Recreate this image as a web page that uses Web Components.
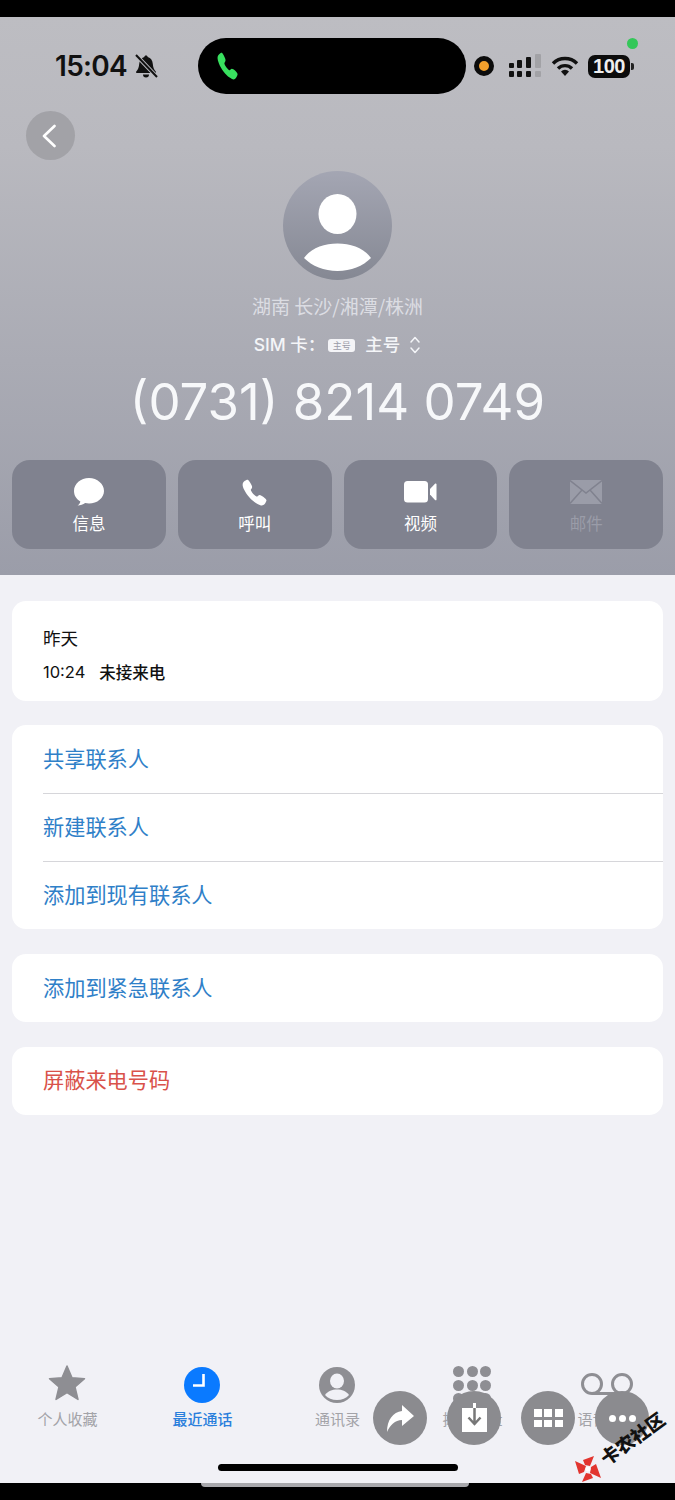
<!DOCTYPE html>
<html lang="zh">
<head>
<meta charset="utf-8">
<title>最近通话</title>
<style>
  html, body { margin: 0; padding: 0; background: #000; }
  body { width: 675px; height: 1500px; overflow: hidden; font-family: Inter, "Noto Sans CJK SC", sans-serif; }
</style>
</head>
<body>
<call-page></call-page>
<script>
// All icons live here so the elements only need a name
const ICONS = {
  phone: `<path fill="currentColor" d="M391 480c-19.5 0-47-7-88-30-50-28-88.500-53.900-138.200-103.400C116.900 298.800 93.600 267.800 61 208.500c-36.800-67-30.600-102.100-23.500-117.200C45.800 73.400 58.200 62.700 74.100 52a176 176 0 0 1 28.600-15.200c1-.4 1.900-.8 2.800-1.200 5-2.200 12.500-5.600 22-2 6.300 2.400 12 7.200 20.900 16 18.200 17.900 43 57.800 52.200 77.400 6.100 13.200 10.200 21.900 10.200 31.700 0 11.500-5.800 20.300-12.800 29.800-1.300 1.800-2.600 3.500-3.900 5.200-7.600 10-9.300 12.900-8.200 18 2.200 10.400 18.900 41.200 46.200 68.500s57.300 42.900 67.700 45.100c5.400 1.200 8.300-.6 18.700-8.500 1.500-1.100 3-2.300 4.600-3.500 10.700-7.900 19.100-13.500 30.300-13.500 9.700 0 18.100 4.200 31.900 11.200 18 9.100 59.100 33.600 77.100 51.800 8.800 8.800 13.700 14.500 16.100 20.800 3.600 9.500.2 17-2 22-.4.800-.8 1.700-1.200 2.700a176 176 0 0 1-15.300 28.600c-10.600 15.900-21.400 28.200-39.400 36.600A67 67 0 0 1 391 480z"/>`,
  bubble: `<path fill="currentColor" d="M12.500 0C5.600 0 0 5.200 0 11.500c0 3.900 2 7.300 5.300 9.400-.3 1.400-1 2.600-2.300 3.600 2.400 0 4.600-.8 6.300-2.200 1 .2 2.100.4 3.200.4 6.900 0 12.500-5.100 12.500-11.200S19.400 0 12.500 0z"/>`,
  video: `<rect x="0" y="0" width="24" height="21.500" rx="3.500" fill="currentColor"/><path fill="currentColor" d="M26 8l5-5.200c.7-.7 1.500-.3 1.500.6v15c0 .9-.8 1.300-1.500.6L26 13.500z"/>`,
  mail: `<rect x="0" y="0" width="32" height="24" fill="currentColor"/><path fill="none" stroke="#80828f" stroke-width="1.500" d="M0 .5 16 13 32 .5M0 23.500 12 10M32 23.500 20 10"/>`,
  star: `<path fill="currentColor" stroke="currentColor" stroke-width="1.500" stroke-linejoin="round" d="M20 1l5 11.800 12.500 1-9.500 8.200 3 12.400L20 27.700 9 34.400l3-12.400-9.500-8.200 12.500-1z"/>`,
  back: `<path fill="none" stroke="currentColor" stroke-width="2.600" stroke-linecap="round" stroke-linejoin="round" d="M12.500 2 2 12l10.500 10"/>`,
  share: `<path fill="currentColor" d="M15 0l12 11-12 10v-6C8 15 3 20 0 27 0 15 6 7 15 6z"/>`,
  updown: `<path fill="none" stroke="currentColor" stroke-width="1.500" stroke-linecap="round" stroke-linejoin="round" d="M2 6l4-4.500L10 6M2 12l4 4.500 4-4.500"/>`,
  bell: `<path fill="currentColor" d="M12 1.500c-1 0-1.700.7-1.700 1.600C7 4 5.500 6.500 5.200 10c-.3 3.500-1 5.500-3 7.500V19h19.600v-1.500c-2-2-2.700-4-3-7.500-.3-3.500-1.800-6-5.100-6.900 0-.9-.7-1.600-1.700-1.600z"/><path fill="currentColor" d="M9 20.500h6a3 3 0 0 1-6 0z"/><path stroke="#bcbcc1" stroke-width="4" d="M2 1l21 22"/><path stroke="currentColor" stroke-width="2" d="M2 1l21 22"/>`
};

class AppIcon extends HTMLElement {
  connectedCallback() {
    const name = this.getAttribute('name');
    const w = this.getAttribute('w') || 24;
    const h = this.getAttribute('h') || w;
    const box = this.getAttribute('box') || '0 0 24 24';
    this.attachShadow({ mode: 'open' }).innerHTML = `
      <style>:host { display: block; width: ${w}px; height: ${h}px; } svg { display: block; }</style>
      <svg xmlns="http://www.w3.org/2000/svg" width="${w}" height="${h}" viewBox="${box}" preserveAspectRatio="none">${ICONS[name]}</svg>`;
  }
}

class StatusBar extends HTMLElement {
  connectedCallback() {
    this.attachShadow({ mode: 'open' }).innerHTML = `
    <style>
      :host { display: flex; align-items: center; height: 56px; padding: 21px 0 0 55px; position: relative; color: #111; }
      .time { font: 600 28px/1 Inter, sans-serif; width: 79px; letter-spacing: -.7px; }
      .bell { width: 64px; }
      .island { width: 268px; height: 56px; border-radius: 28px; background: #000; color: #38e05f; display: flex; align-items: center; padding-left: 19px; box-sizing: border-box; }
      .rec { width: 20px; height: 20px; background: #f2a02c; border: 5px solid #0c0c0c; box-sizing: border-box; border-radius: 50%; margin-left: 8px; }
      .signal { margin-left: 15px; }
      .wifi { margin-left: 9px; }
      .battery { margin-left: 9px; display: flex; align-items: center; }
      .cell { width: 42px; height: 23px; border-radius: 7px; background: #0c0c0c; color: #eee; font: 700 20px/23px "Liberation Sans", sans-serif; text-align: center; letter-spacing: -.5px; }
      .nub { width: 3px; height: 7px; margin-left: 1px; background: #222; border-radius: 0 2px 2px 0; }
      .green { position: absolute; left: 627px; top: 21px; width: 11px; height: 11px; border-radius: 50%; background: #34c759; }
    </style>
    <div class="time">15:04</div>
    <div class="bell"><app-icon name="bell" w="24" h="24"></app-icon></div>
    <div class="island"><app-icon name="phone" w="21" h="28" box="20 20 470 470"></app-icon></div>
    <div class="rec"></div>
    <svg class="signal" width="33" height="24" viewBox="0 0 33 24">
      <g fill="#111"><rect x="0" y="9" width="5" height="5" rx="1"/><rect x="0" y="17" width="5" height="6" rx="1"/><rect x="8" y="6" width="5" height="8" rx="1"/><rect x="8" y="17" width="5" height="6" rx="1"/><rect x="17" y="3" width="5" height="11" rx="1"/><rect x="17" y="17" width="5" height="6" rx="1"/></g>
      <g fill="#a2a2a6"><rect x="26" y="0" width="6" height="14" rx="1"/><rect x="26" y="17" width="6" height="6" rx="1"/></g>
    </svg>
    <svg class="wifi" width="28" height="22" viewBox="0 0 28 22">
      <g fill="none" stroke="#111" stroke-width="3.400"><path d="M2 8.500a17 17 0 0 1 24 0"/><path d="M7 13.500a10 10 0 0 1 14 0"/></g>
      <path fill="#111" d="M14 21l-4-4.500a5.500 5.500 0 0 1 8 0z"/>
    </svg>
    <div class="battery"><div class="cell">100</div><div class="nub"></div></div>
    <div class="green"></div>`;
  }
}

class ActionButton extends HTMLElement {
  connectedCallback() {
    this.attachShadow({ mode: 'open' }).innerHTML = `
    <style>
      :host { display: flex; flex-direction: column; align-items: center; height: 89px; border-radius: 18px; background: #80828f; color: #fff; box-sizing: border-box; }
      :host([disabled]) { color: #9a9ca8; }
      .ic { height: 34px; margin-top: 15px; display: flex; align-items: center; justify-content: center; }
      .label { font: 400 16.500px/20px "Noto Sans CJK SC", sans-serif; margin-top: 4px; }
    </style>
    <div class="ic"><slot name="icon"></slot></div>
    <div class="label"><slot></slot></div>`;
  }
}

class ContactHeader extends HTMLElement {
  connectedCallback() {
    this.attachShadow({ mode: 'open' }).innerHTML = `
    <style>
      :host { display: block; height: 558px; box-sizing: border-box; background: linear-gradient(#bdbdc2 0, #b9b9bf 130px, #9b9da9 558px); position: relative; color: #fff; }
      .back { width: 49px; height: 49px; border-radius: 50%; margin: 17px 0 0 26px; padding-right: 4px; box-sizing: border-box; background: #a2a2a7; color: #fff; display: flex; align-items: center; justify-content: center; }
      .avatar { display: block; margin: 11px auto 0; }
      .loc { text-align: center; font: 400 19px/24px "Noto Sans CJK SC", sans-serif; color: #dcdde3; margin-top: 14px; }
      .sim { display: flex; justify-content: center; align-items: center; height: 24px; margin-top: 15px; font: 500 17.500px/24px Inter, "Noto Sans CJK SC", sans-serif; color: #f4f5f8; }
      .colon { margin-right: -7px; }
      .tag { width: 27px; height: 13px; background: #f4f4f7; color: #9a9ca8; border-radius: 3px; font: 400 9px/13px "Noto Sans CJK SC", sans-serif; text-align: center; margin: 0 10px 0 10px; }
      .sim app-icon { margin-left: 9px; }
      .num { text-align: center; font: 400 51px/60px Inter, sans-serif; margin-top: 15px; color: #f7f8fa; white-space: nowrap; }
      .actions { display: grid; grid-template-columns: repeat(4, 1fr); gap: 12px; padding: 0 12px; margin-top: 28px; }
    </style>
    <status-bar></status-bar>
    <div class="back"><app-icon name="back" w="14" h="24"  box="0 0 14 24"></app-icon></div>
    <svg class="avatar" width="109" height="109" viewBox="0 0 109 109">
      <defs><linearGradient id="av" x1="0" y1="0" x2="0" y2="1"><stop offset="0" stop-color="#a4a6b3"/><stop offset="1" stop-color="#858893"/></linearGradient></defs>
      <circle cx="54.500" cy="54.500" r="54.500" fill="url(#av)"/>
      <ellipse cx="54.500" cy="43" rx="19" ry="20" fill="#fff"/>
      <path fill="#fff" d="M21 87c7-10 20-14.500 33.500-14.500S81 77 88 87c-8 8-20 13-33.500 13S29 95 21 87z"/>
    </svg>
    <div class="loc">湖南 长沙/湘潭/株洲</div>
    <div class="sim"><span class="colon">SIM 卡：</span><span class="tag">主号</span>主号<app-icon name="updown" w="12" h="18" box="0 0 12 18"></app-icon></div>
    <div class="num">(0731) 8214 0749</div>
    <div class="actions">
      <action-button><app-icon slot="icon" name="bubble" w="30" h="28" box="0 0 25 25"></app-icon>信息</action-button>
      <action-button><app-icon slot="icon" name="phone" w="25" h="27" box="20 20 470 470"></app-icon>呼叫</action-button>
      <action-button><app-icon slot="icon" name="video" w="33" h="22" box="0 0 33 22"></app-icon>视频</action-button>
      <action-button disabled><app-icon slot="icon" name="mail" w="32" h="24" box="0 0 32 24"></app-icon>邮件</action-button>
    </div>`;
  }
}

class CardGroup extends HTMLElement {
  connectedCallback() {
    this.attachShadow({ mode: 'open' }).innerHTML = `
    <style>
      :host { display: block; background: #fff; border-radius: 14px; overflow: hidden; }
    </style>
    <slot></slot>`;
  }
}

class ActionRow extends HTMLElement {
  connectedCallback() {
    this.attachShadow({ mode: 'open' }).innerHTML = `
    <style>
      :host { display: block; margin-left: 31px; height: 68px; box-sizing: border-box; font: 400 21.200px/66px "Noto Sans CJK SC", sans-serif; color: #2f80c8; }
      :host([danger]) { color: #d9524a; line-height: 64px; }
      :host([line]) { border-top: 1px solid #d6d6da; line-height: 64px; }
    </style>
    <slot></slot>`;
  }
}

class CallLog extends HTMLElement {
  connectedCallback() {
    this.attachShadow({ mode: 'open' }).innerHTML = `
    <style>
      :host { display: block; height: 100px; padding: 25px 0 0 31px; box-sizing: border-box; color: #111; }
      .day { font: 400 17.500px/24px "Noto Sans CJK SC", sans-serif; }
      .row { display: flex; margin-top: 10px; font: 400 16.500px/24px Inter, sans-serif; }
      .row span { margin-left: 14px; font: 500 16.500px/24px "Noto Sans CJK SC", sans-serif; }
    </style>
    <div class="day">昨天</div>
    <div class="row">10:24<span>未接来电</span></div>`;
  }
}

class TabItem extends HTMLElement {
  connectedCallback() {
    this.attachShadow({ mode: 'open' }).innerHTML = `
    <style>
      :host { display: flex; flex-direction: column; align-items: center; color: #8e8e93; }
      :host([active]) { color: #0a7aff; }
      .ic { height: 40px; display: flex; align-items: center; justify-content: center; }
      .label { font: 400 15px/20px "Noto Sans CJK SC", sans-serif; color: #a3a3a8; margin-top: 4px; white-space: nowrap; }
      :host([active]) .label { color: #2a7fdc; font-weight: 500; }
    </style>
    <div class="ic"><slot name="icon"></slot></div>
    <div class="label"><slot></slot></div>`;
  }
}

class FloatButton extends HTMLElement {
  connectedCallback() {
    this.attachShadow({ mode: 'open' }).innerHTML = `
    <style>
      :host { display: flex; width: 54px; height: 54px; border-radius: 50%; background: #8b8b8f; align-items: center; justify-content: center; color: #fff; }
    </style>
    <slot></slot>`;
  }
}

class CallPage extends HTMLElement {
  connectedCallback() {
    this.attachShadow({ mode: 'open' }).innerHTML = `
    <style>
      :host { display: flex; flex-direction: column; width: 675px; height: 1500px; position: relative; overflow: hidden; background: #000; }
      .top { height: 17px; flex: none; background: #000; }
      .body { flex: 1; background: #f1f1f6; display: flex; flex-direction: column; }
      .cards { display: flex; flex-direction: column; padding: 26px 12px 0; }
      .gap1 { margin-top: 24px; }
      .gap2 { margin-top: 25px; }
      .tabs { margin-top: auto; display: grid; grid-template-columns: repeat(5, 135px); justify-items: center; }
      .home { height: 7px; width: 240px; background: #000; border-radius: 4px; margin: 35px 0 12px 218px; }
      .strip { height: 17px; flex: none; background: #000; position: relative; }
      .strip i { position: absolute; left: 201px; top: 0; width: 268px; height: 4px; background: #a9a9ad; border-radius: 0 0 4px 4px; }
      .floats { position: absolute; left: 373px; top: 1391px; display: flex; gap: 20px; }
      .mark { position: absolute; left: 595px; top: 1426px; transform: rotate(-36deg); font: 900 18.500px/24px "Noto Sans CJK SC", sans-serif; color: #111; white-space: nowrap; }
      .bow { position: absolute; left: 574px; top: 1455px; }
      .keypad { display: grid; grid-template-columns: repeat(3, 11px); gap: 2.500px; }
      .keypad i { width: 11px; height: 11px; border-radius: 50%; background: #8e8e93; }
      .grid { display: grid; grid-template-columns: repeat(3, 8px); grid-auto-rows: 7.500px; gap: 3px 2.500px; }
      .grid i { background: #fff; }
      .dots { display: flex; gap: 3px; }
      .dots i { width: 7px; height: 7px; border-radius: 50%; background: #fff; }
    </style>
    <div class="top"></div>
    <contact-header></contact-header>
    <div class="body">
      <div class="cards">
        <card-group><call-log></call-log></card-group>
        <card-group class="gap1">
          <action-row>共享联系人</action-row>
          <action-row line>新建联系人</action-row>
          <action-row line>添加到现有联系人</action-row>
        </card-group>
        <card-group class="gap2"><action-row>添加到紧急联系人</action-row></card-group>
        <card-group class="gap2"><action-row danger>屏蔽来电号码</action-row></card-group>
      </div>
      <div class="tabs">
        <tab-item><app-icon slot="icon" name="star" w="40" h="40" box="0 0 40 40"></app-icon>个人收藏</tab-item>
        <tab-item active>
          <svg slot="icon" width="36" height="36" viewBox="0 0 36 36"><circle cx="18" cy="18" r="18" fill="#0a7aff"/><path fill="none" stroke="#fff" stroke-width="2.600" d="M19.500 7v11.500H9"/></svg>
          最近通话</tab-item>
        <tab-item>
          <svg slot="icon" width="36" height="36" viewBox="0 0 36 36"><circle cx="18" cy="18" r="18" fill="#8e8e93"/><ellipse cx="18" cy="14" rx="7" ry="7.500" fill="#f1f1f6"/><path fill="#f1f1f6" d="M6 28c3-4 7-5.500 12-5.500S27 24 30 28c-3 3.500-7 5-12 5S9 31.500 6 28z"/></svg>
          通讯录</tab-item>
        <tab-item>
          <div slot="icon" class="keypad"><i></i><i></i><i></i><i></i><i></i><i></i><i></i><i></i><i></i></div>
          拨号键盘</tab-item>
        <tab-item>
          <svg slot="icon" width="54" height="24" viewBox="0 0 54 24"><g fill="none" stroke="#8e8e93" stroke-width="3"><circle cx="12" cy="11" r="9.500"/><circle cx="42" cy="11" r="9.500"/><path d="M12 20.500h30"/></g></svg>
          语音留言</tab-item>
      </div>
      <div class="home"></div>
    </div>
    <div class="strip"><i></i></div>
    <div class="floats">
      <float-button><app-icon name="share" w="27" h="27" box="0 0 27 27"></app-icon></float-button>
      <float-button>
        <svg width="25" height="29" viewBox="0 0 25 29" style="margin-top:-1px"><path fill="#fff" d="M0 5h25v24H0z"/><path fill="#fff" d="M11 0h3v5h-3z"/><path fill="none" stroke="#777" stroke-width="2.500" d="M12.500 5v15M6.500 14.500l6 6.500 6-6.500"/></svg>
      </float-button>
      <float-button><div class="grid"><i></i><i></i><i></i><i></i><i></i><i></i></div></float-button>
      <float-button><div class="dots"><i></i><i></i><i></i></div></float-button>
    </div>
    <div class="mark">卡农社区</div>
    <svg class="bow" width="28" height="28" viewBox="0 0 28 28">
      <path fill="#e2352f" d="M1 6l11 5-2 6-5 2zM27 23l-11-5 1-6 5-3zM20 1l-4 10-5-1-2-5zM8 27l4-9 5 1 2 4z"/>
      <circle cx="14" cy="14" r="2.500" fill="#fff"/>
    </svg>`;
  }
}

customElements.define('app-icon', AppIcon);
customElements.define('status-bar', StatusBar);
customElements.define('action-button', ActionButton);
customElements.define('contact-header', ContactHeader);
customElements.define('card-group', CardGroup);
customElements.define('action-row', ActionRow);
customElements.define('call-log', CallLog);
customElements.define('tab-item', TabItem);
customElements.define('float-button', FloatButton);
customElements.define('call-page', CallPage);
</script>
</body>
</html>
